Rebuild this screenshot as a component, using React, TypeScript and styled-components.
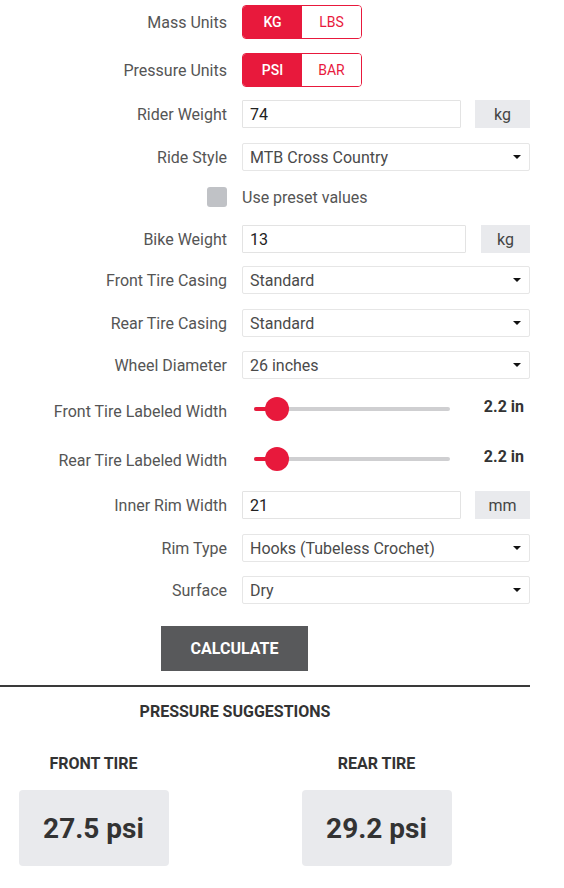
import React from 'react';
import styled, { createGlobalStyle } from 'styled-components';

const GlobalStyle = createGlobalStyle`
  body {
    margin: 0;
    background: #fff;
    font-family: Roboto, "Liberation Sans", sans-serif;
    color: #333;
  }
`;

const RED = '#e8193c';

const Page = styled.div`
  width: 530px;
  padding-top: 5px;
`;

const Form = styled.div`
  display: flex;
  flex-direction: column;
`;

const Row = styled.div<{ $height?: number; $mt?: number }>`
  display: grid;
  grid-template-columns: 227px 288px;
  column-gap: 15px;
  align-items: center;
  min-height: ${({ $height }) => ($height ? `${$height}px` : '28px')};
  margin-top: ${({ $mt }) => ($mt ? `${$mt}px` : '0')};
`;

const Label = styled.div<{ $shift?: number }>`
  text-align: right;
  font-size: 16px;
  font-weight: 400;
  color: #555;
  white-space: nowrap;
  padding-top: ${({ $shift }) => ($shift ? `${$shift}px` : '0')};
`;

const ToggleGroup = styled.div`
  display: inline-flex;
  justify-self: start;
  border: 1px solid ${RED};
  border-radius: 4px;
  overflow: hidden;
`;

const ToggleButton = styled.button<{ $active?: boolean }>`
  width: 59px;
  height: 32px;
  border: none;
  margin: 0;
  padding: 0;
  font-family: inherit;
  font-size: 14px;
  font-weight: ${({ $active }) => ($active ? 500 : 400)};
  background: ${({ $active }) => ($active ? RED : '#fff')};
  color: ${({ $active }) => ($active ? '#fff' : RED)};
`;

const InputGroup = styled.div<{ $gap: number }>`
  display: flex;
  align-items: stretch;
  gap: ${({ $gap }) => $gap}px;
`;

const TextInput = styled.input`
  flex: 1;
  min-width: 0;
  height: 28px;
  box-sizing: border-box;
  border: 1px solid #e3e3e3;
  border-radius: 1px;
  padding: 0 7px;
  font-family: inherit;
  font-size: 16px;
  color: #222;
  outline: none;
`;

const Addon = styled.div<{ $width: number }>`
  width: ${({ $width }) => $width}px;
  display: flex;
  align-items: center;
  justify-content: center;
  background: #e9eaed;
  font-size: 16px;
  color: #444;
`;

const SelectBox = styled.div`
  position: relative;
  height: 28px;
  box-sizing: border-box;
  border: 1px solid #e6e6e6;
  border-radius: 2px;
  display: flex;
  align-items: center;
  padding-left: 7px;
  font-size: 16px;
  font-weight: 400;
  color: #4a4a4a;

  &::after {
    content: '';
    position: absolute;
    right: 8px;
    top: 50%;
    margin-top: -2px;
    border-left: 4px solid transparent;
    border-right: 4px solid transparent;
    border-top: 4px solid #111;
  }
`;

const CheckBox = styled.div`
  justify-self: end;
  width: 20px;
  height: 20px;
  border-radius: 3px;
  background: #c0c2c6;
`;

const CheckText = styled.div`
  font-size: 16px;
  color: #555;
`;

const SliderWrap = styled.div`
  display: flex;
  align-items: center;
  padding-left: 12px;
`;

const Track = styled.div`
  position: relative;
  width: 196px;
  height: 4px;
  border-radius: 2px;
  background: #cfcfd1;
`;

const Fill = styled.div`
  position: absolute;
  left: 0;
  top: 0;
  height: 100%;
  border-radius: 2px;
  background: ${RED};
`;

const Thumb = styled.div`
  position: absolute;
  top: 50%;
  width: 24px;
  height: 24px;
  border-radius: 50%;
  background: ${RED};
  transform: translate(-50%, -50%);
`;

const SliderValue = styled.div`
  flex: 1;
  text-align: right;
  padding-right: 6px;
  margin-top: -5px;
  font-size: 16px;
  font-weight: 700;
  color: #333;
`;

const CalcRow = styled.div`
  display: flex;
  padding-left: 161px;
  margin-top: 22px;
`;

const CalcButton = styled.button`
  width: 147px;
  height: 45px;
  border: none;
  background: #58595b;
  color: #fff;
  font-family: inherit;
  font-size: 16px;
  font-weight: 700;
`;

const Divider = styled.hr`
  margin: 14px 0 0;
  border: none;
  border-top: 2px solid #3a3a3a;
`;

const Results = styled.div`
  width: 470px;
  padding-top: 15px;
`;

const ResultsTitle = styled.div`
  text-align: center;
  font-size: 16px;
  line-height: 19px;
  font-weight: 700;
  color: #333;
`;

const ResultsGrid = styled.div`
  display: flex;
  justify-content: space-between;
  margin-top: 33px;
`;

const ResultCol = styled.div`
  width: 187px;
  display: flex;
  flex-direction: column;
  align-items: center;
`;

const ResultLabel = styled.div`
  font-size: 16px;
  line-height: 19px;
  font-weight: 700;
  color: #333;
`;

const ResultBox = styled.div`
  margin-top: 17px;
  width: 150px;
  height: 76px;
  border-radius: 4px;
  background: #e9eaed;
  display: flex;
  align-items: center;
  justify-content: center;
  font-size: 28px;
  font-weight: 700;
  color: #333;
`;

const Toggle = ({ options, active }: { options: string[]; active: string }) => (
  <ToggleGroup>
    {options.map((o) => (
      <ToggleButton key={o} $active={o === active}>
        {o}
      </ToggleButton>
    ))}
  </ToggleGroup>
);

const Slider = ({ pct, value }: { pct: number; value: string }) => (
  <SliderWrap>
    <Track>
      <Fill style={{ width: `${pct}%` }} />
      <Thumb style={{ left: `${pct}%` }} />
    </Track>
    <SliderValue>{value}</SliderValue>
  </SliderWrap>
);

export default function App() {
  return (
    <Page>
      <GlobalStyle />
      <Form>
        <Row $height={34}>
          <Label>Mass Units</Label>
          <Toggle options={['KG', 'LBS']} active="KG" />
        </Row>
        <Row $height={34} $mt={14}>
          <Label>Pressure Units</Label>
          <Toggle options={['PSI', 'BAR']} active="PSI" />
        </Row>
        <Row $mt={13}>
          <Label>Rider Weight</Label>
          <InputGroup $gap={14}>
            <TextInput defaultValue="74" />
            <Addon $width={55}>kg</Addon>
          </InputGroup>
        </Row>
        <Row $mt={15}>
          <Label>Ride Style</Label>
          <SelectBox>MTB Cross Country</SelectBox>
        </Row>
        <Row $height={24} $mt={14}>
          <CheckBox />
          <CheckText>Use preset values</CheckText>
        </Row>
        <Row $mt={16}>
          <Label>Bike Weight</Label>
          <InputGroup $gap={15}>
            <TextInput defaultValue="13" />
            <Addon $width={49}>kg</Addon>
          </InputGroup>
        </Row>
        <Row $mt={13}>
          <Label>Front Tire Casing</Label>
          <SelectBox>Standard</SelectBox>
        </Row>
        <Row $mt={15}>
          <Label>Rear Tire Casing</Label>
          <SelectBox>Standard</SelectBox>
        </Row>
        <Row $mt={14}>
          <Label>Wheel Diameter</Label>
          <SelectBox>26 inches</SelectBox>
        </Row>
        <Row $height={36} $mt={12}>
          <Label $shift={4}>Front Tire Labeled Width</Label>
          <Slider pct={11.5} value="2.2 in" />
        </Row>
        <Row $height={36} $mt={14}>
          <Label $shift={2}>Rear Tire Labeled Width</Label>
          <Slider pct={11.5} value="2.2 in" />
        </Row>
        <Row $mt={14}>
          <Label>Inner Rim Width</Label>
          <InputGroup $gap={14}>
            <TextInput defaultValue="21" />
            <Addon $width={55}>mm</Addon>
          </InputGroup>
        </Row>
        <Row $mt={15}>
          <Label>Rim Type</Label>
          <SelectBox>Hooks (Tubeless Crochet)</SelectBox>
        </Row>
        <Row $mt={14}>
          <Label>Surface</Label>
          <SelectBox>Dry</SelectBox>
        </Row>
      </Form>
      <CalcRow>
        <CalcButton>CALCULATE</CalcButton>
      </CalcRow>
      <Divider />
      <Results>
        <ResultsTitle>PRESSURE SUGGESTIONS</ResultsTitle>
        <ResultsGrid>
          <ResultCol>
            <ResultLabel>FRONT TIRE</ResultLabel>
            <ResultBox>27.5 psi</ResultBox>
          </ResultCol>
          <ResultCol>
            <ResultLabel>REAR TIRE</ResultLabel>
            <ResultBox>29.2 psi</ResultBox>
          </ResultCol>
        </ResultsGrid>
      </Results>
    </Page>
  );
}
